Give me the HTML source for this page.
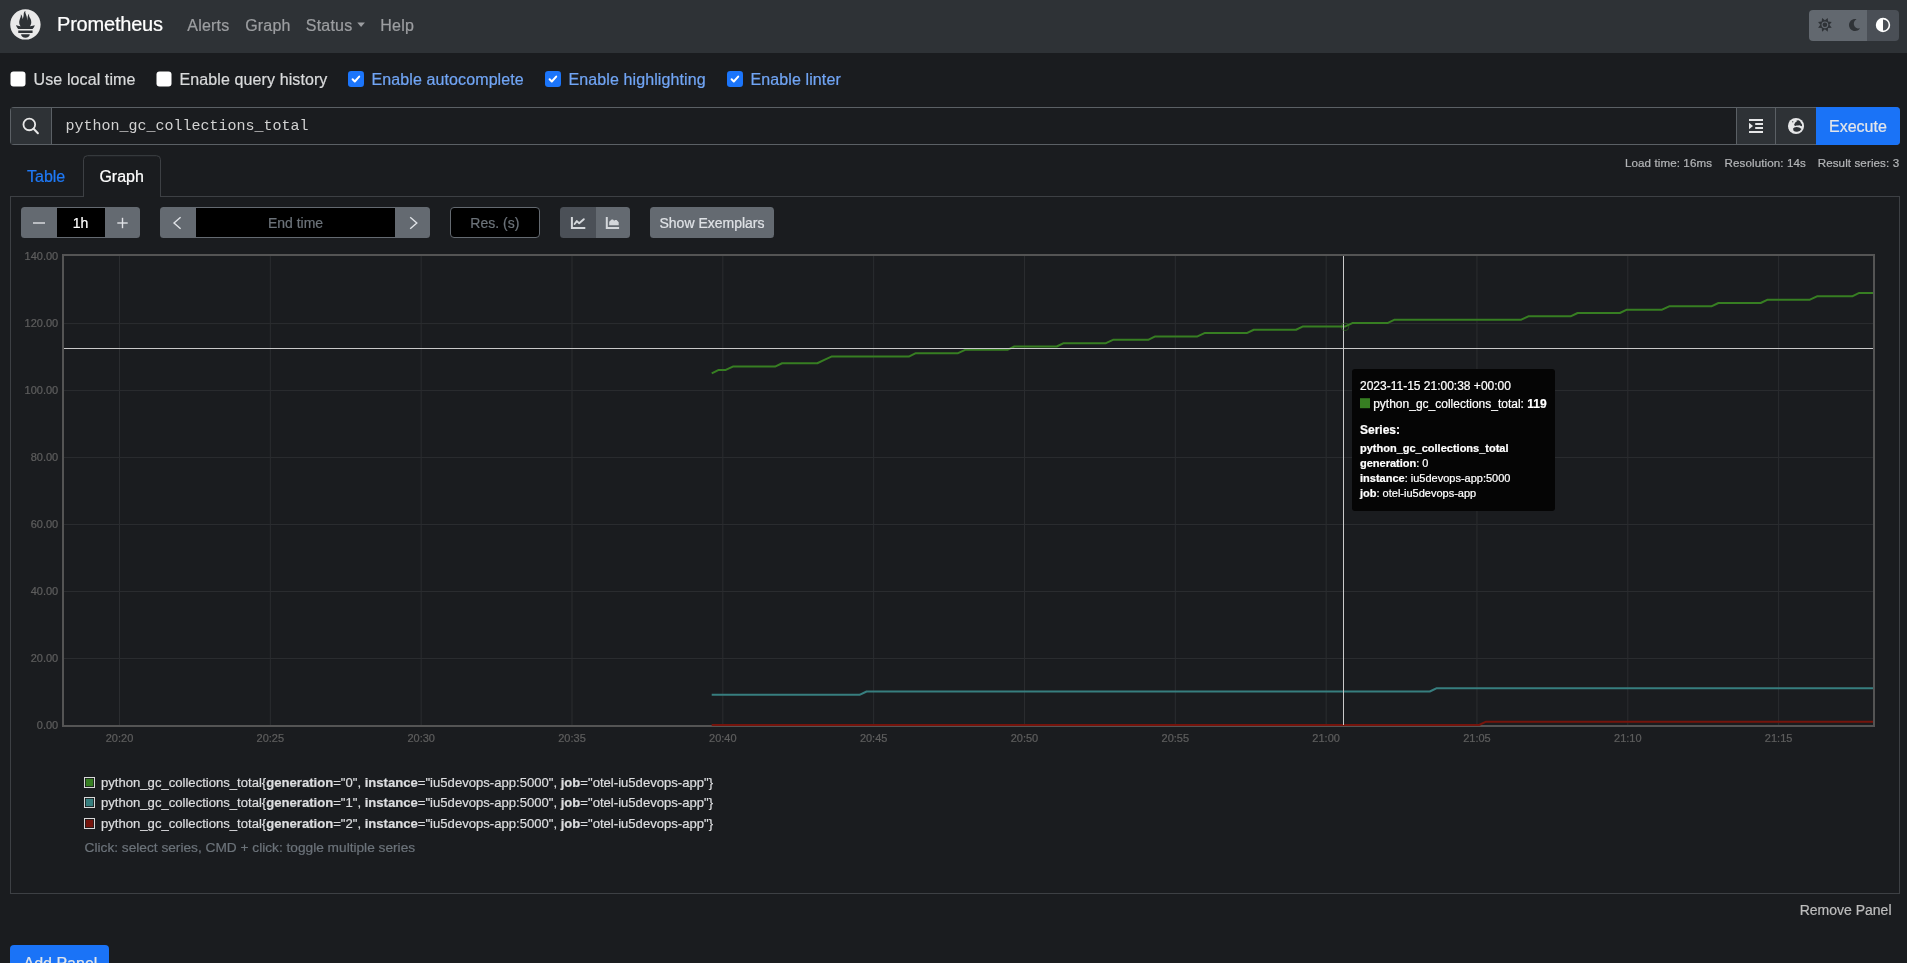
<!DOCTYPE html>
<html lang="en"><head><meta charset="utf-8"><title>Prometheus Time Series Collection and Processing Server</title>
<style>
html,body{margin:0;padding:0;background:#1a1c1f;width:1907px;height:963px;overflow:hidden;font-family:"Liberation Sans",sans-serif;}
svg text{white-space:pre}
</style></head>
<body>
<svg width="1907" height="963" viewBox="0 0 1907 963" style="position:absolute;left:0;top:0;display:block;will-change:transform"><rect x="0" y="0" width="1907" height="53" fill="#2e3236" />
<g transform="translate(10.211,9.011) scale(0.26842)"><path d="M56.667.667C25.372.667 0 26.036 0 57.332c0 31.295 25.372 56.666 56.667 56.666s56.666-25.371 56.666-56.666C113.333 26.036 87.961.667 56.667.667zm0 106.395c-8.904 0-16.123-5.948-16.123-13.283H72.79c0 7.334-7.219 13.283-16.123 13.283zM83.297 89.4H30.034v-9.658h53.264V89.4h-.001zm-.191-14.629H30.186c-.176-.203-.356-.403-.526-.609-5.452-6.62-6.736-10.076-7.983-13.598-.021-.116 6.611 1.355 11.314 2.413 0 0 2.42.56 5.958 1.205-3.397-3.982-5.414-9.044-5.414-14.218 0-11.359 8.712-21.285 5.569-29.308 3.059.249 6.331 6.456 6.552 16.161 3.252-4.494 4.613-12.701 4.613-17.733 0-5.21 3.433-11.262 6.867-11.469-3.061 5.045.793 9.37 4.219 20.099 1.285 4.03 1.121 10.812 2.113 15.113.329-8.933 1.865-21.967 7.532-26.467-2.5 5.667.37 12.758 2.333 16.167 3.167 5.5 5.087 9.667 5.087 17.548 0 5.284-1.951 10.259-5.242 14.148 3.742-.702 6.326-1.335 6.326-1.335l12.152-2.371c.001-.001-1.765 7.261-8.55 14.251z" fill="#e9e9e9"/></g>
<text x="57.0" y="30.7" text-anchor="start" style="font-family:&quot;Liberation Sans&quot;;font-size:20px;fill:#ffffff;font-weight:400;stroke:#ffffff;stroke-width:0.22px;letter-spacing:-0.2px">Prometheus</text>
<text x="187.3" y="30.7" text-anchor="start" style="font-family:&quot;Liberation Sans&quot;;font-size:16px;fill:#9c9ea1;font-weight:400;stroke:#9c9ea1;stroke-width:0.22px;letter-spacing:0.2px">Alerts</text>
<text x="245.2" y="30.7" text-anchor="start" style="font-family:&quot;Liberation Sans&quot;;font-size:16px;fill:#9c9ea1;font-weight:400;stroke:#9c9ea1;stroke-width:0.22px;letter-spacing:0.2px">Graph</text>
<text x="305.8" y="30.7" text-anchor="start" style="font-family:&quot;Liberation Sans&quot;;font-size:16px;fill:#9c9ea1;font-weight:400;stroke:#9c9ea1;stroke-width:0.22px;letter-spacing:0.2px">Status</text>
<text x="380.3" y="30.7" text-anchor="start" style="font-family:&quot;Liberation Sans&quot;;font-size:16px;fill:#9c9ea1;font-weight:400;stroke:#9c9ea1;stroke-width:0.22px;letter-spacing:0.2px">Help</text>
<path d="M357.3 22.6h7.6l-3.8 4.4z" fill="#9c9ea1"/>
<clipPath id="thm"><rect x="1809" y="10" width="90" height="31" rx="4"/></clipPath>
<g clip-path="url(#thm)">
<rect x="1809" y="10" width="58" height="31" fill="#62686f" />
<rect x="1867" y="10" width="32" height="31" fill="#4a4f56" />
</g>
<polygon points="1827.73,17.96 1828.08,21.62 1831.74,21.97 1829.40,24.80 1831.74,27.63 1828.08,27.98 1827.73,31.64 1824.90,29.30 1822.07,31.64 1821.72,27.98 1818.06,27.63 1820.40,24.80 1818.06,21.97 1821.72,21.62 1822.07,17.96 1824.90,20.30" fill="#2f3337"/>
<circle cx="1824.9" cy="24.8" r="3.4" fill="#62686f"/>
<circle cx="1824.9" cy="24.8" r="2.3" fill="#2f3337"/>
<g transform="translate(1848.357,18.9) scale(0.02363)"><path d="M283.211 512c78.962 0 151.079-35.925 198.857-94.792 7.068-8.708-.639-21.43-11.562-19.35-124.203 23.654-238.262-71.576-238.262-196.954 0-72.222 38.662-138.635 101.498-174.394 9.686-5.512 7.25-20.197-3.756-22.23A258.156 258.156 0 0 0 283.211 0c-141.309 0-256 114.511-256 256 0 141.309 114.511 256 256 256z" fill="#2f3337"/></g>
<circle cx="1883" cy="25" r="6.4" fill="none" stroke="#ffffff" stroke-width="1.6"/>
<path d="M1883 18.6 A6.4 6.4 0 0 0 1883 31.4z" fill="#ffffff"/>
<rect x="10.5" y="71.5" width="15" height="15" fill="#ffffff" rx="3" />
<text x="33.6" y="85.2" text-anchor="start" style="font-family:&quot;Liberation Sans&quot;;font-size:16px;fill:#d9dadb;font-weight:400;stroke:#d9dadb;stroke-width:0.22px;letter-spacing:0.1px">Use local time</text>
<rect x="156.5" y="71.5" width="15" height="15" fill="#ffffff" rx="3" />
<text x="179.6" y="85.2" text-anchor="start" style="font-family:&quot;Liberation Sans&quot;;font-size:16px;fill:#d9dadb;font-weight:400;stroke:#d9dadb;stroke-width:0.22px;letter-spacing:0.1px">Enable query history</text>
<rect x="348" y="71" width="16" height="16" fill="#1b75fb" rx="3.2" />
<path d="M352.6 79.3 l2.2 2.2 l4.4-4.9" fill="none" stroke="#ffffff" stroke-width="2" stroke-linecap="round" stroke-linejoin="round"/>
<text x="371.6" y="85.2" text-anchor="start" style="font-family:&quot;Liberation Sans&quot;;font-size:16px;fill:#71a5f5;font-weight:400;stroke:#71a5f5;stroke-width:0.22px;letter-spacing:0.1px">Enable autocomplete</text>
<rect x="545" y="71" width="16" height="16" fill="#1b75fb" rx="3.2" />
<path d="M549.6 79.3 l2.2 2.2 l4.4-4.9" fill="none" stroke="#ffffff" stroke-width="2" stroke-linecap="round" stroke-linejoin="round"/>
<text x="568.6" y="85.2" text-anchor="start" style="font-family:&quot;Liberation Sans&quot;;font-size:16px;fill:#71a5f5;font-weight:400;stroke:#71a5f5;stroke-width:0.22px;letter-spacing:0.1px">Enable highlighting</text>
<rect x="727" y="71" width="16" height="16" fill="#1b75fb" rx="3.2" />
<path d="M731.6 79.3 l2.2 2.2 l4.4-4.9" fill="none" stroke="#ffffff" stroke-width="2" stroke-linecap="round" stroke-linejoin="round"/>
<text x="750.6" y="85.2" text-anchor="start" style="font-family:&quot;Liberation Sans&quot;;font-size:16px;fill:#71a5f5;font-weight:400;stroke:#71a5f5;stroke-width:0.22px;letter-spacing:0.1px">Enable linter</text>
<clipPath id="qg"><rect x="10" y="107" width="1890" height="38" rx="4"/></clipPath>
<g clip-path="url(#qg)">
<rect x="10" y="107" width="1890" height="38" fill="#5b6065" />
<rect x="11" y="108" width="40" height="36" fill="#2e3236" />
<rect x="52" y="108" width="1684" height="36" fill="#1a1c1f" />
<rect x="1737" y="108" width="38" height="36" fill="#2e3236" />
<rect x="1776" y="108" width="40" height="36" fill="#2e3236" />
<rect x="1816" y="107" width="84" height="38" fill="#1a73f7" />
</g>
<circle cx="29.3" cy="124.4" r="5.85" fill="none" stroke="#e8e8e8" stroke-width="1.8"/>
<path d="M33.6 128.8 L37.9 133.2" stroke="#e8e8e8" stroke-width="2.0" stroke-linecap="round"/>
<text x="65.5" y="129.7" text-anchor="start" style="font-family:&quot;Liberation Mono&quot;;font-size:15px;fill:#d2d2d2;font-weight:400">python_gc_collections_total</text>
<rect x="1749" y="119" width="14" height="2" fill="#e6e7e8" />
<rect x="1755.2" y="123" width="7.8" height="2" fill="#e6e7e8" />
<rect x="1755.2" y="127" width="7.8" height="2" fill="#e6e7e8" />
<rect x="1749" y="131" width="14" height="2" fill="#e6e7e8" />
<path d="M1749 122.8 L1753 126 L1749 129.3z" fill="#e6e7e8"/>
<circle cx="1796" cy="126" r="8.05" fill="#e6e7e8"/>
<path d="M1794.0 125.0 L1795.2 122.6 L1796.8 121.5 L1796.5 120.6 L1798.6 120.2 L1800.1 121.3 L1801.0 122.9 L1802.0 124.4 L1802.1 126.2 L1800.9 126.0 L1799.6 125.3 L1798.0 125.6 L1796.6 125.4 L1795.2 125.9z" fill="#2e3236"/>
<path d="M1793.1 128.6 Q1793.8 127.0 1796.6 127.0 Q1799.6 127.1 1801.5 128.9 Q1800.2 131.2 1797.2 131.8 Q1794.6 132.0 1793.4 130.4z" fill="#2e3236"/>
<circle cx="1792.7" cy="121.8" r="0.75" fill="#2e3236" opacity="0.7"/>
<text x="1829" y="131.9" text-anchor="start" style="font-family:&quot;Liberation Sans&quot;;font-size:16px;fill:#e3e6ea;font-weight:400;stroke:#e3e6ea;stroke-width:0.22px">Execute</text>
<text x="1624.9" y="166.8" text-anchor="start" style="font-family:&quot;Liberation Sans&quot;;font-size:11.6px;fill:#b3b5b7;font-weight:400;stroke:#b3b5b7;stroke-width:0.22px;letter-spacing:0.1px">Load time: 16ms</text>
<text x="1724.5" y="166.8" text-anchor="start" style="font-family:&quot;Liberation Sans&quot;;font-size:11.6px;fill:#b3b5b7;font-weight:400;stroke:#b3b5b7;stroke-width:0.22px;letter-spacing:0.1px">Resolution: 14s</text>
<text x="1817.7" y="166.8" text-anchor="start" style="font-family:&quot;Liberation Sans&quot;;font-size:11.6px;fill:#b3b5b7;font-weight:400;stroke:#b3b5b7;stroke-width:0.22px;letter-spacing:0.1px">Result series: 3</text>
<rect x="10" y="196" width="1890" height="1" fill="#3d4044" />
<rect x="10" y="196" width="1" height="698" fill="#3d4044" />
<rect x="1899" y="196" width="1" height="698" fill="#3d4044" />
<rect x="10" y="893" width="1890" height="1" fill="#3d4044" />
<path d="M83.5 197 V159.7 a4 4 0 0 1 4 -4 H156.5 a4 4 0 0 1 4 4 V197" fill="#1a1c1f" stroke="#3d4044" stroke-width="1"/>
<rect x="84" y="196" width="76" height="1.5" fill="#1a1c1f" />
<text x="27" y="182.1" text-anchor="start" style="font-family:&quot;Liberation Sans&quot;;font-size:16px;fill:#1f7af8;font-weight:400;stroke:#1f7af8;stroke-width:0.22px">Table</text>
<text x="99.4" y="182.1" text-anchor="start" style="font-family:&quot;Liberation Sans&quot;;font-size:16px;fill:#ffffff;font-weight:400;stroke:#ffffff;stroke-width:0.22px">Graph</text>
<clipPath id="g1"><rect x="21" y="207" width="119" height="31" rx="3.5"/></clipPath>
<g clip-path="url(#g1)">
<rect x="21" y="207" width="119" height="31" fill="#646a71" />
<rect x="57" y="208" width="48" height="29" fill="#000000" />
</g>
<rect x="33" y="222.3" width="12" height="1.4" fill="#dfe2e6" />
<rect x="117.3" y="222.3" width="10.4" height="1.4" fill="#dfe2e6" />
<rect x="121.8" y="217.8" width="1.4" height="10.4" fill="#dfe2e6" />
<text x="80.5" y="227.8" text-anchor="middle" style="font-family:&quot;Liberation Sans&quot;;font-size:14px;fill:#ffffff;font-weight:400;stroke:#ffffff;stroke-width:0.22px">1h</text>
<clipPath id="g2"><rect x="160" y="207" width="270" height="31" rx="3.5"/></clipPath>
<g clip-path="url(#g2)">
<rect x="160" y="207" width="270" height="31" fill="#646a71" />
<rect x="196" y="208" width="199" height="29" fill="#000000" />
</g>
<path d="M180.6 217.2 L174 223 L180.6 228.8" fill="none" stroke="#dfe2e6" stroke-width="1.4"/>
<path d="M410.2 217.2 L416.8 223 L410.2 228.8" fill="none" stroke="#dfe2e6" stroke-width="1.4"/>
<text x="295.5" y="227.8" text-anchor="middle" style="font-family:&quot;Liberation Sans&quot;;font-size:14px;fill:#6c737a;font-weight:400;stroke:#6c737a;stroke-width:0.22px">End time</text>
<rect x="450.5" y="207.5" width="89" height="30" fill="#000000" rx="3.5" stroke="#646a71" stroke-width="1"/>
<text x="494.8" y="227.8" text-anchor="middle" style="font-family:&quot;Liberation Sans&quot;;font-size:14px;fill:#6c737a;font-weight:400;stroke:#6c737a;stroke-width:0.22px">Res. (s)</text>
<clipPath id="g3"><rect x="560" y="207" width="70" height="31" rx="3.5"/></clipPath>
<g clip-path="url(#g3)">
<rect x="560" y="207" width="36" height="31" fill="#4b5057" />
<rect x="596" y="207" width="34" height="31" fill="#646a71" />
</g>
<path d="M571.9 217.1 V227.9 H585.3" fill="none" stroke="#d4d7db" stroke-width="2"/>
<path d="M574.6 224.0 L576.8 221.1 L579.2 223.3 L583.8 219.2" fill="none" stroke="#d4d7db" stroke-width="1.9" stroke-linecap="round" stroke-linejoin="round"/>
<path d="M606.8 217.1 V227.9 H619.1" fill="none" stroke="#d4d7db" stroke-width="2"/>
<path d="M609.2 225.2 V221.8 L611.6 219.4 L613 219.6 L614.2 220.8 L615 220 L616.6 220 L618.7 222.2 V225.2z" fill="#d4d7db"/>
<rect x="650" y="207" width="124" height="31" fill="#646a71" rx="3.5" />
<text x="712" y="227.9" text-anchor="middle" style="font-family:&quot;Liberation Sans&quot;;font-size:14px;fill:#dfe2e6;font-weight:400;stroke:#dfe2e6;stroke-width:0.22px">Show Exemplars</text>
<rect x="119.0" y="256" width="1" height="469" fill="#2b2d30" />
<rect x="269.83" y="256" width="1" height="469" fill="#2b2d30" />
<rect x="420.66" y="256" width="1" height="469" fill="#2b2d30" />
<rect x="571.49" y="256" width="1" height="469" fill="#2b2d30" />
<rect x="722.32" y="256" width="1" height="469" fill="#2b2d30" />
<rect x="873.15" y="256" width="1" height="469" fill="#2b2d30" />
<rect x="1023.98" y="256" width="1" height="469" fill="#2b2d30" />
<rect x="1174.81" y="256" width="1" height="469" fill="#2b2d30" />
<rect x="1325.64" y="256" width="1" height="469" fill="#2b2d30" />
<rect x="1476.47" y="256" width="1" height="469" fill="#2b2d30" />
<rect x="1627.3" y="256" width="1" height="469" fill="#2b2d30" />
<rect x="1778.13" y="256" width="1" height="469" fill="#2b2d30" />
<rect x="64" y="658.01" width="1809" height="1" fill="#2b2d30" />
<rect x="64" y="591.02" width="1809" height="1" fill="#2b2d30" />
<rect x="64" y="524.04" width="1809" height="1" fill="#2b2d30" />
<rect x="64" y="457.05" width="1809" height="1" fill="#2b2d30" />
<rect x="64" y="390.06" width="1809" height="1" fill="#2b2d30" />
<rect x="64" y="323.07" width="1809" height="1" fill="#2b2d30" />
<rect x="62" y="254" width="1813" height="2" fill="#545454" />
<rect x="62" y="725" width="1813" height="2" fill="#545454" />
<rect x="62" y="254" width="2" height="473" fill="#545454" />
<rect x="1873" y="254" width="2" height="473" fill="#545454" />
<text x="58.2" y="729.0" text-anchor="end" style="font-family:&quot;Liberation Sans&quot;;font-size:11px;fill:#5e5e5e;font-weight:400;stroke:#5e5e5e;stroke-width:0.22px">0.00</text>
<text x="58.2" y="662.01" text-anchor="end" style="font-family:&quot;Liberation Sans&quot;;font-size:11px;fill:#5e5e5e;font-weight:400;stroke:#5e5e5e;stroke-width:0.22px">20.00</text>
<text x="58.2" y="595.02" text-anchor="end" style="font-family:&quot;Liberation Sans&quot;;font-size:11px;fill:#5e5e5e;font-weight:400;stroke:#5e5e5e;stroke-width:0.22px">40.00</text>
<text x="58.2" y="528.04" text-anchor="end" style="font-family:&quot;Liberation Sans&quot;;font-size:11px;fill:#5e5e5e;font-weight:400;stroke:#5e5e5e;stroke-width:0.22px">60.00</text>
<text x="58.2" y="461.05" text-anchor="end" style="font-family:&quot;Liberation Sans&quot;;font-size:11px;fill:#5e5e5e;font-weight:400;stroke:#5e5e5e;stroke-width:0.22px">80.00</text>
<text x="58.2" y="394.06" text-anchor="end" style="font-family:&quot;Liberation Sans&quot;;font-size:11px;fill:#5e5e5e;font-weight:400;stroke:#5e5e5e;stroke-width:0.22px">100.00</text>
<text x="58.2" y="327.07" text-anchor="end" style="font-family:&quot;Liberation Sans&quot;;font-size:11px;fill:#5e5e5e;font-weight:400;stroke:#5e5e5e;stroke-width:0.22px">120.00</text>
<text x="58.2" y="260.08" text-anchor="end" style="font-family:&quot;Liberation Sans&quot;;font-size:11px;fill:#5e5e5e;font-weight:400;stroke:#5e5e5e;stroke-width:0.22px">140.00</text>
<text x="119.5" y="742" text-anchor="middle" style="font-family:&quot;Liberation Sans&quot;;font-size:11px;fill:#5e5e5e;font-weight:400;stroke:#5e5e5e;stroke-width:0.22px">20:20</text>
<text x="270.33" y="742" text-anchor="middle" style="font-family:&quot;Liberation Sans&quot;;font-size:11px;fill:#5e5e5e;font-weight:400;stroke:#5e5e5e;stroke-width:0.22px">20:25</text>
<text x="421.16" y="742" text-anchor="middle" style="font-family:&quot;Liberation Sans&quot;;font-size:11px;fill:#5e5e5e;font-weight:400;stroke:#5e5e5e;stroke-width:0.22px">20:30</text>
<text x="571.99" y="742" text-anchor="middle" style="font-family:&quot;Liberation Sans&quot;;font-size:11px;fill:#5e5e5e;font-weight:400;stroke:#5e5e5e;stroke-width:0.22px">20:35</text>
<text x="722.82" y="742" text-anchor="middle" style="font-family:&quot;Liberation Sans&quot;;font-size:11px;fill:#5e5e5e;font-weight:400;stroke:#5e5e5e;stroke-width:0.22px">20:40</text>
<text x="873.65" y="742" text-anchor="middle" style="font-family:&quot;Liberation Sans&quot;;font-size:11px;fill:#5e5e5e;font-weight:400;stroke:#5e5e5e;stroke-width:0.22px">20:45</text>
<text x="1024.48" y="742" text-anchor="middle" style="font-family:&quot;Liberation Sans&quot;;font-size:11px;fill:#5e5e5e;font-weight:400;stroke:#5e5e5e;stroke-width:0.22px">20:50</text>
<text x="1175.31" y="742" text-anchor="middle" style="font-family:&quot;Liberation Sans&quot;;font-size:11px;fill:#5e5e5e;font-weight:400;stroke:#5e5e5e;stroke-width:0.22px">20:55</text>
<text x="1326.14" y="742" text-anchor="middle" style="font-family:&quot;Liberation Sans&quot;;font-size:11px;fill:#5e5e5e;font-weight:400;stroke:#5e5e5e;stroke-width:0.22px">21:00</text>
<text x="1476.97" y="742" text-anchor="middle" style="font-family:&quot;Liberation Sans&quot;;font-size:11px;fill:#5e5e5e;font-weight:400;stroke:#5e5e5e;stroke-width:0.22px">21:05</text>
<text x="1627.8" y="742" text-anchor="middle" style="font-family:&quot;Liberation Sans&quot;;font-size:11px;fill:#5e5e5e;font-weight:400;stroke:#5e5e5e;stroke-width:0.22px">21:10</text>
<text x="1778.63" y="742" text-anchor="middle" style="font-family:&quot;Liberation Sans&quot;;font-size:11px;fill:#5e5e5e;font-weight:400;stroke:#5e5e5e;stroke-width:0.22px">21:15</text>
<path d="M711.70 373.31 L718.74 369.96 L725.78 369.96 L732.82 366.61 L775.06 366.61 L782.10 363.26 L817.30 363.26 L824.34 359.92 L831.38 356.57 L908.82 356.57 L915.86 353.22 L958.10 353.22 L965.14 349.87 L1007.38 349.87 L1014.42 346.52 L1056.66 346.52 L1063.70 343.17 L1105.94 343.17 L1112.98 339.82 L1148.18 339.82 L1155.22 336.47 L1197.46 336.47 L1204.50 333.12 L1246.74 333.12 L1253.78 329.77 L1296.02 329.77 L1303.06 326.42 L1345.30 326.42 L1352.34 323.07 L1387.54 323.07 L1394.58 319.72 L1521.30 319.72 L1528.34 316.37 L1570.58 316.37 L1577.62 313.02 L1619.86 313.02 L1626.90 309.67 L1662.10 309.67 L1669.14 306.32 L1711.38 306.32 L1718.42 302.98 L1760.66 302.98 L1767.70 299.63 L1809.94 299.63 L1816.98 296.28 L1852.18 296.28 L1859.22 292.93 L1873.02 292.93" fill="none" stroke="#377e22" stroke-width="2" stroke-linejoin="round"/>
<path d="M711.70 694.86 L859.54 694.86 L866.58 691.51 L1429.78 691.51 L1436.82 688.16 L1873.02 688.16" fill="none" stroke="#377e7f" stroke-width="2" stroke-linejoin="round"/>
<path d="M711.70 725.00 L1479.06 725.00 L1486.10 721.65 L1873.02 721.65" fill="none" stroke="#75140c" stroke-width="2" stroke-linejoin="round"/>
<rect x="1343" y="256" width="1" height="469" fill="#c9c9c9" />
<rect x="64" y="348" width="1809" height="1" fill="#c9c9c9" />
<circle cx="1345.0" cy="326.82" r="3.8" fill="none" stroke="#377e22" stroke-width="1" opacity="0.55"/>
<rect x="1352" y="369" width="203" height="142" fill="#050505" rx="3" />
<text x="1360" y="389.9" text-anchor="start" style="font-family:&quot;Liberation Sans&quot;;font-size:12px;fill:#ffffff;font-weight:400;stroke:#ffffff;stroke-width:0.22px">2023-11-15 21:00:38 +00:00</text>
<rect x="1360" y="398.2" width="10" height="10" fill="#377e22" />
<text x="1373.2" y="408.2" text-anchor="start" style="font-family:&quot;Liberation Sans&quot;;font-size:12px;fill:#ffffff;font-weight:400;stroke:#ffffff;stroke-width:0.22px">python_gc_collections_total: <tspan style="font-weight:700">119</tspan></text>
<text x="1360" y="433.5" text-anchor="start" style="font-family:&quot;Liberation Sans&quot;;font-size:12px;fill:#ffffff;font-weight:700;stroke:#ffffff;stroke-width:0.22px">Series:</text>
<text x="1360" y="451.7" text-anchor="start" style="font-family:&quot;Liberation Sans&quot;;font-size:11px;fill:#ffffff;font-weight:700;stroke:#ffffff;stroke-width:0.22px">python_gc_collections_total</text>
<text x="1360" y="466.7" text-anchor="start" style="font-family:&quot;Liberation Sans&quot;;font-size:11px;fill:#ffffff;font-weight:400;stroke:#ffffff;stroke-width:0.22px"><tspan style="font-weight:700">generation</tspan>: 0</text>
<text x="1360" y="481.7" text-anchor="start" style="font-family:&quot;Liberation Sans&quot;;font-size:11px;fill:#ffffff;font-weight:400;stroke:#ffffff;stroke-width:0.22px"><tspan style="font-weight:700">instance</tspan>: iu5devops-app:5000</text>
<text x="1360" y="496.6" text-anchor="start" style="font-family:&quot;Liberation Sans&quot;;font-size:11px;fill:#ffffff;font-weight:400;stroke:#ffffff;stroke-width:0.22px"><tspan style="font-weight:700">job</tspan>: otel-iu5devops-app</text>
<rect x="84" y="777" width="11" height="11" fill="#d8d8d8" />
<rect x="85" y="778" width="9" height="9" fill="#1a1c1f" />
<rect x="85.8" y="778.8" width="7.4" height="7.4" fill="#377e22" />
<text x="101" y="786.7" text-anchor="start" style="font-family:&quot;Liberation Sans&quot;;font-size:13.1px;fill:#dcdddf;font-weight:400;stroke:#dcdddf;stroke-width:0.22px">python_gc_collections_total{<tspan style="font-weight:700">generation</tspan>=&quot;0&quot;, <tspan style="font-weight:700">instance</tspan>=&quot;iu5devops-app:5000&quot;, <tspan style="font-weight:700">job</tspan>=&quot;otel-iu5devops-app&quot;}</text>
<rect x="84" y="797" width="11" height="11" fill="#d8d8d8" />
<rect x="85" y="798" width="9" height="9" fill="#1a1c1f" />
<rect x="85.8" y="798.8" width="7.4" height="7.4" fill="#377e7f" />
<text x="101" y="806.9" text-anchor="start" style="font-family:&quot;Liberation Sans&quot;;font-size:13.1px;fill:#dcdddf;font-weight:400;stroke:#dcdddf;stroke-width:0.22px">python_gc_collections_total{<tspan style="font-weight:700">generation</tspan>=&quot;1&quot;, <tspan style="font-weight:700">instance</tspan>=&quot;iu5devops-app:5000&quot;, <tspan style="font-weight:700">job</tspan>=&quot;otel-iu5devops-app&quot;}</text>
<rect x="84" y="818" width="11" height="11" fill="#d8d8d8" />
<rect x="85" y="819" width="9" height="9" fill="#1a1c1f" />
<rect x="85.8" y="819.8" width="7.4" height="7.4" fill="#75140c" />
<text x="101" y="827.6" text-anchor="start" style="font-family:&quot;Liberation Sans&quot;;font-size:13.1px;fill:#dcdddf;font-weight:400;stroke:#dcdddf;stroke-width:0.22px">python_gc_collections_total{<tspan style="font-weight:700">generation</tspan>=&quot;2&quot;, <tspan style="font-weight:700">instance</tspan>=&quot;iu5devops-app:5000&quot;, <tspan style="font-weight:700">job</tspan>=&quot;otel-iu5devops-app&quot;}</text>
<text x="84.6" y="852.4" text-anchor="start" style="font-family:&quot;Liberation Sans&quot;;font-size:13.7px;fill:#6c737a;font-weight:400;stroke:#6c737a;stroke-width:0.22px">Click: select series, CMD + click: toggle multiple series</text>
<text x="1891.5" y="915.2" text-anchor="end" style="font-family:&quot;Liberation Sans&quot;;font-size:14px;fill:#bdbdbd;font-weight:400;stroke:#bdbdbd;stroke-width:0.22px">Remove Panel</text>
<rect x="10" y="945" width="99" height="40" fill="#1a73f7" rx="4" />
<text x="23.5" y="969" text-anchor="start" style="font-family:&quot;Liberation Sans&quot;;font-size:16px;fill:#e3e6ea;font-weight:400;stroke:#e3e6ea;stroke-width:0.22px">Add Panel</text></svg>
</body></html>
